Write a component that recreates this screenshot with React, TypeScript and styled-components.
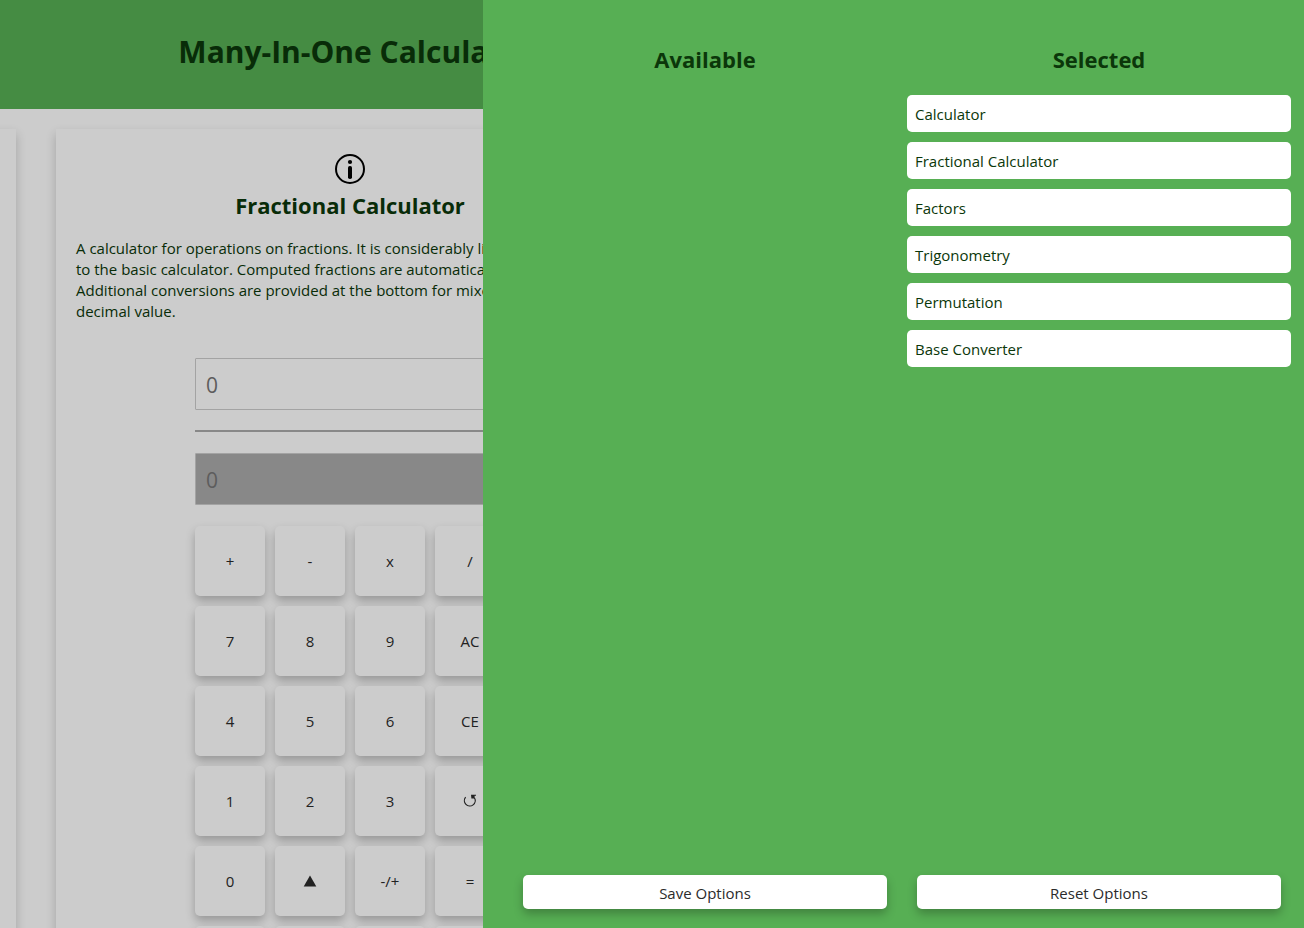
import React from "react";
import styled, { createGlobalStyle } from "styled-components";

const GlobalStyle = createGlobalStyle`
  * { box-sizing: border-box; }
  body {
    margin: 0;
    background: #ffffff;
    color: #0b370a;
    font-family: "Open Sans", "Noto Sans", sans-serif;
    font-size: 15px;
    line-height: 21px;
  }
  h1, h2, p, ul { margin: 0; padding: 0; }
  button, input { font-family: inherit; }
`;

const Shell = styled.div`
  position: relative;
  height: 100vh;
  overflow: hidden;
`;

/* The page slides left while the options drawer is open. */
const Page = styled.div`
  margin-left: -302px;
  margin-right: 302px;
`;

const Header = styled.header`
  display: flex;
  align-items: center;
  justify-content: center;
  padding: 30px 0 35px 12px;
  background: #57af54;
`;

const Title = styled.h1`
  font-size: 30px;
  font-weight: 700;
  line-height: 44px;
`;

const Carousel = styled.main`
  display: flex;
  justify-content: center;
  gap: 40px;
  padding: 20px 0;
`;

const Card = styled.section`
  display: flex;
  flex-direction: column;
  align-items: center;
  flex: 0 0 588px;
  padding: 25px 20px 20px;
  background: #ffffff;
  box-shadow: 0 5px 10px rgba(0, 0, 0, 0.2);
`;

const InfoButton = styled.button`
  display: flex;
  padding: 0;
  border: 0;
  background: none;
  color: #000000;
`;

const Heading = styled.h2`
  text-align: center;
  font-size: 22px;
  font-weight: 700;
  line-height: 32px;
`;

const CardHeading = styled(Heading)`
  margin: 5px 0 17px;
`;

const Description = styled.p`
  width: 100%;
`;

const Calculator = styled.div`
  display: flex;
  flex-direction: column;
  width: 310px;
  margin-top: 36px;
`;

const Display = styled.input<{ $muted?: boolean }>`
  width: 100%;
  height: 52px;
  padding: 2px 10px 0;
  border: 1px solid #cccccc;
  border-radius: 1px;
  background: ${(p) => (p.$muted ? "#aaaaaa" : "#ffffff")};
  color: #333333;
  font-size: 21px;
  &::placeholder { color: #757575; opacity: 1; }
`;

const FractionBar = styled.hr`
  width: 100%;
  height: 2px;
  margin: 20px 0 21px;
  border: 0;
  background: #aaaaaa;
`;

const Keypad = styled.div`
  display: grid;
  grid-template-columns: repeat(4, 70px);
  grid-auto-rows: 70px;
  gap: 10px;
  margin-top: 21px;
`;

const Button = styled.button`
  display: flex;
  align-items: center;
  justify-content: center;
  padding: 0;
  border: 0;
  border-radius: 5px;
  background: #ffffff;
  color: #2b2b2b;
  font-size: 15px;
  line-height: 21px;
  box-shadow: 0 5px 10px rgba(0, 0, 0, 0.25);
`;

const Overlay = styled.div`
  position: absolute;
  inset: 0;
  background: rgba(0, 0, 0, 0.2);
`;

const Drawer = styled.aside`
  position: absolute;
  top: 0;
  right: 0;
  bottom: 0;
  display: flex;
  flex-direction: column;
  width: 63%;
  max-width: 821px;
  padding: 43px 13px 19px 30px;
  background: #57af54;
`;

const Columns = styled.div`
  display: grid;
  grid-template-columns: 1fr 1fr;
  gap: 10px;
  flex: 1;
`;

const Column = styled.section`
  display: flex;
  flex-direction: column;
  gap: 20px;
`;

const OptionList = styled.ul`
  display: flex;
  flex-direction: column;
  gap: 10px;
  list-style: none;
`;

const Option = styled.li`
  padding: 9px 8px 7px;
  border-radius: 5px;
  background: #ffffff;
`;

const Actions = styled.div`
  display: grid;
  grid-template-columns: 1fr 1fr;
  gap: 30px;
  padding: 0 10px;
`;

const ActionButton = styled(Button)`
  height: 34px;
  padding-top: 2px;
`;

const InfoIcon = () => (
  <svg width="30" height="30" viewBox="0 0 30 30" aria-hidden="true">
    <circle cx="15" cy="15" r="14" fill="none" stroke="currentColor" strokeWidth="2" />
    <circle cx="15" cy="8" r="2.1" fill="currentColor" />
    <rect x="13" y="12" width="4" height="13" rx="1.8" fill="currentColor" />
  </svg>
);

const UndoIcon = () => (
  <svg width="14" height="14" viewBox="0 0 14 14" aria-hidden="true">
    <path d="M2.6 3.2A5.4 5.4 0 1 0 11.4 3.8" fill="none" stroke="currentColor" strokeWidth="1.2" />
    <path d="M8 0.8H13V1.8H11.6V4.4H8.4Z" fill="currentColor" />
  </svg>
);

const TriangleIcon = () => (
  <svg width="14" height="12" viewBox="0 0 14 12" aria-hidden="true">
    <path d="M7 0.5L13.3 11.5H0.7Z" fill="currentColor" />
  </svg>
);

const keys: { label: string; icon?: React.ReactNode }[] = [
  { label: "+" }, { label: "-" }, { label: "x" }, { label: "/" },
  { label: "7" }, { label: "8" }, { label: "9" }, { label: "AC" },
  { label: "4" }, { label: "5" }, { label: "6" }, { label: "CE" },
  { label: "1" }, { label: "2" }, { label: "3" }, { label: "Undo", icon: <UndoIcon /> },
  { label: "0" }, { label: "Up", icon: <TriangleIcon /> }, { label: "-/+" }, { label: "=" },
];

const selected = [
  "Calculator",
  "Fractional Calculator",
  "Factors",
  "Trigonometry",
  "Permutation",
  "Base Converter",
];

export default function App() {
  return (
    <Shell>
      <GlobalStyle />
      <Page>
        <Header>
          <Title>Many-In-One Calculator</Title>
        </Header>
        <Carousel>
          <Card />
          <Card>
            <InfoButton aria-label="About this calculator">
              <InfoIcon />
            </InfoButton>
            <CardHeading>Fractional Calculator</CardHeading>
            <Description>
              A calculator for operations on fractions. It is considerably limited compared
              <br />
              to the basic calculator. Computed fractions are automatically simplified.
              <br />
              Additional conversions are provided at the bottom for mixed number and
              decimal value.
            </Description>
            <Calculator>
              <Display aria-label="Numerator" placeholder="0" />
              <FractionBar />
              <Display aria-label="Denominator" placeholder="0" $muted />
              <Keypad>
                {keys.map((key) => (
                  <Button key={key.label} aria-label={key.label}>
                    {key.icon ?? key.label}
                  </Button>
                ))}
                <Button aria-label="Memory 1" />
                <Button aria-label="Memory 2" />
                <Button aria-label="Memory 3" />
                <Button aria-label="Memory 4" />
              </Keypad>
            </Calculator>
          </Card>
          <Card />
        </Carousel>
      </Page>
      <Overlay />
      <Drawer>
        <Columns>
          <Column>
            <Heading>Available</Heading>
          </Column>
          <Column>
            <Heading>Selected</Heading>
            <OptionList>
              {selected.map((name) => (
                <Option key={name}>{name}</Option>
              ))}
            </OptionList>
          </Column>
        </Columns>
        <Actions>
          <ActionButton>Save Options</ActionButton>
          <ActionButton>Reset Options</ActionButton>
        </Actions>
      </Drawer>
    </Shell>
  );
}
